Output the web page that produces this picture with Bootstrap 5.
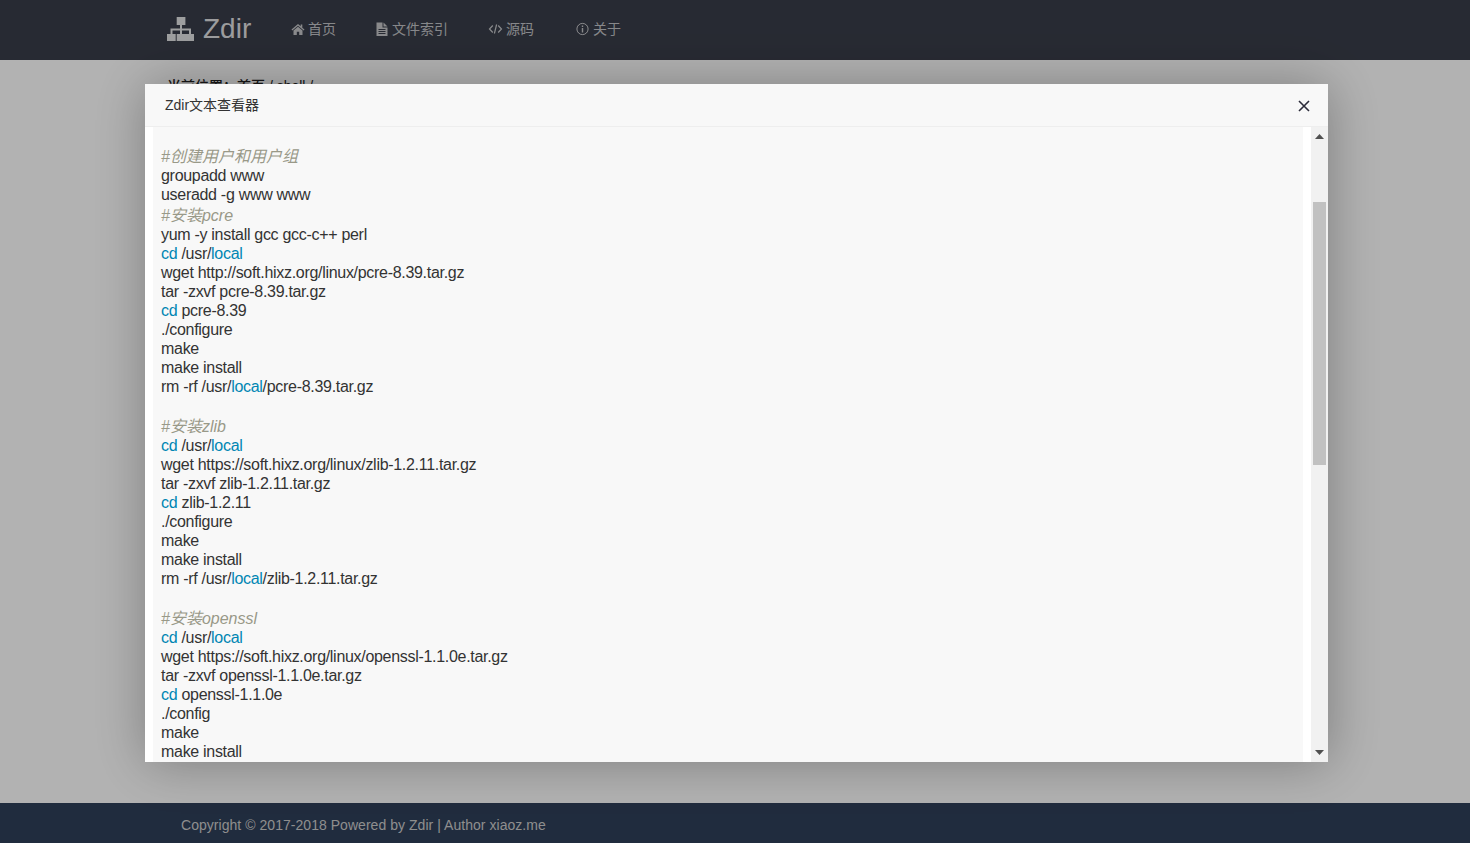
<!DOCTYPE html>
<html lang="zh-CN">
<head>
<meta charset="utf-8">
<title>Zdir</title>
<link href="https://cdn.jsdelivr.net/npm/bootstrap@5.3.0/dist/css/bootstrap.min.css" rel="stylesheet">
<style>
html,body{height:100%;}
body{font-family:"Liberation Sans","Noto Sans CJK SC",sans-serif;font-size:14px;background:#fff;overflow:hidden;}
.zd-page{height:100vh;}
.zd-nav{height:60px;background:#393d49;padding-left:167px;padding-bottom:2px;}
.zd-logo{color:rgba(255,255,255,.85);font-size:28px;line-height:58px;text-decoration:none;width:124px;}
.zd-logo svg{width:28px;height:24px;margin:0 8px 0 0;}
.zd-link{color:rgba(255,255,255,.7);text-decoration:none;font-size:14px;line-height:58px;margin-right:39px;}
.zd-link:nth-child(3){margin-right:40px;}
.zd-link:nth-child(4){margin-right:41px;}
.zd-link svg{width:14px;height:14px;margin-right:3px;fill:currentColor;}
.zd-link svg.zd-wide{width:15px;}
.zd-crumb{padding:16px 0 0 167px;font-size:14px;color:#222;line-height:21px;font-weight:500;}
.zd-foot{height:40px;background:#2f3f59;color:#ccc;padding-left:181px;line-height:44px;font-size:14px;letter-spacing:.04px;}
.zd-shade{position:fixed;inset:0;background:rgba(0,0,0,.3);}
.zd-layer{position:fixed;left:145px;top:84px;width:1183px;height:678px;background:#fff;box-shadow:1px 1px 50px rgba(0,0,0,.3);}
.zd-head{height:43px;background:#f8f8f8;border-bottom:1px solid #eee;padding:0 17px 0 20px;color:#333;font-size:14px;line-height:42px;}
.zd-x{width:14px;height:14px;stroke:#2c2c3a;stroke-width:1.6;margin-top:2px;}
.zd-body{min-height:0;}
.zd-white{padding:0 8px;min-width:0;}
.zd-code{height:100%;overflow:hidden;background:#f8f8f8;color:#333;font-size:16px;padding:18px 8px 0;white-space:nowrap;}
.zd-ln{height:19px;line-height:19px;letter-spacing:-.3px;}
.zd-gap{height:19px;}
.zd-cm{height:21px;line-height:19px;padding-top:2px;color:#999988;font-style:italic;}
.zd-bi{color:#0086b3;}
.zd-track{width:17px;background:#f1f1f1;}
.zd-tri{width:9px;height:5px;fill:#505050;margin:7px auto 0;display:block;}
.zd-tri-b{margin:0 auto 7px;}
.zd-thumb{width:13px;height:263px;background:#c1c1c1;margin:63px auto 0;}
</style>
</head>
<body>
<div class="zd-page d-flex flex-column">
  <nav class="zd-nav d-flex align-items-center">
    <a class="zd-logo d-flex align-items-center" href="#">
      <svg viewBox="0 0 28 24" fill="currentColor"><path d="M9.700 0h8.700v8h-3.400v3.500h9V17h3v7h-8.700v-7h3.700v-3.500H15V17h3.400v7H9.700v-7H13v-3.500H5.500V17h3.200v7H0v-7h3.500v-5.500H13V8H9.700z"/></svg>Zdir
    </a>
    <a class="zd-link d-flex align-items-center" href="#"><svg viewBox="0 0 14 14"><path d="M7 2 0.500 7.600l.8.9L7 3.700l5.700 4.800.8-.9L11.300 5.700V2.500H9.700v1.800zM2.500 8.500V13h3.300V9.800h2.400V13h3.300V8.500L7 4.700z"/></svg>首页</a>
    <a class="zd-link d-flex align-items-center" href="#"><svg viewBox="0 0 14 14"><path d="M1.500 0.500H7.500V5.500H12.500V14H1.500zM8.500 0.500 12.500 4.500H8.500zM3.500 7v1h7V7zM3.500 9v1h7V9zM3.500 11v1h7v-1z" fill-rule="evenodd"/></svg>文件索引</a>
    <a class="zd-link d-flex align-items-center" href="#"><svg class="zd-wide" viewBox="0 0 14 14"><path d="M4.300 3.500 1 7l3.300 3.500M9.700 3.500 13 7l-3.300 3.500M8.100 2.500 5.900 11.500" fill="none" stroke="currentColor" stroke-width="1.200"/></svg>源码</a>
    <a class="zd-link d-flex align-items-center" href="#"><svg class="zd-wide" viewBox="0 0 14 14"><circle cx="7" cy="7" r="5.600" fill="none" stroke="currentColor"/><path d="M6.300 3.600h1.400v1.400H6.300zM6.300 6h1.400v4.400H6.300z"/></svg>关于</a>
  </nav>
  <div class="zd-crumb flex-grow-1">当前位置：首页 / shell /</div>
  <footer class="zd-foot">Copyright © 2017-2018 Powered by Zdir | Author xiaoz.me</footer>
</div>
<div class="zd-shade"></div>
<div class="zd-layer d-flex flex-column">
  <div class="zd-head d-flex justify-content-between align-items-center flex-shrink-0">
    <span>Zdir文本查看器</span>
    <svg class="zd-x" viewBox="0 0 14 14"><path d="M2 2 12 12M12 2 2 12"/></svg>
  </div>
  <div class="zd-body d-flex flex-grow-1">
    <div class="zd-white flex-grow-1"><div class="zd-code">
<div class="zd-cm">#创建用户和用户组</div>
<div class="zd-ln">groupadd www</div>
<div class="zd-ln">useradd -g www www</div>
<div class="zd-cm">#安装pcre</div>
<div class="zd-ln">yum -y install gcc gcc-c++ perl</div>
<div class="zd-ln"><span class="zd-bi">cd</span> /usr/<span class="zd-bi">local</span></div>
<div class="zd-ln">wget http://soft.hixz.org/linux/pcre-8.39.tar.gz</div>
<div class="zd-ln">tar -zxvf pcre-8.39.tar.gz</div>
<div class="zd-ln"><span class="zd-bi">cd</span> pcre-8.39</div>
<div class="zd-ln">./configure</div>
<div class="zd-ln">make</div>
<div class="zd-ln">make install</div>
<div class="zd-ln">rm -rf /usr/<span class="zd-bi">local</span>/pcre-8.39.tar.gz</div>
<div class="zd-gap"></div>
<div class="zd-cm">#安装zlib</div>
<div class="zd-ln"><span class="zd-bi">cd</span> /usr/<span class="zd-bi">local</span></div>
<div class="zd-ln">wget https://soft.hixz.org/linux/zlib-1.2.11.tar.gz</div>
<div class="zd-ln">tar -zxvf zlib-1.2.11.tar.gz</div>
<div class="zd-ln"><span class="zd-bi">cd</span> zlib-1.2.11</div>
<div class="zd-ln">./configure</div>
<div class="zd-ln">make</div>
<div class="zd-ln">make install</div>
<div class="zd-ln">rm -rf /usr/<span class="zd-bi">local</span>/zlib-1.2.11.tar.gz</div>
<div class="zd-gap"></div>
<div class="zd-cm">#安装openssl</div>
<div class="zd-ln"><span class="zd-bi">cd</span> /usr/<span class="zd-bi">local</span></div>
<div class="zd-ln">wget https://soft.hixz.org/linux/openssl-1.1.0e.tar.gz</div>
<div class="zd-ln">tar -zxvf openssl-1.1.0e.tar.gz</div>
<div class="zd-ln"><span class="zd-bi">cd</span> openssl-1.1.0e</div>
<div class="zd-ln">./config</div>
<div class="zd-ln">make</div>
<div class="zd-ln">make install</div>
    </div></div>
    <div class="zd-track d-flex flex-column flex-shrink-0">
      <svg class="zd-tri" viewBox="0 0 9 5"><path d="M4.500 0 9 5H0z"/></svg>
      <div class="zd-thumb"></div>
      <div class="flex-grow-1"></div>
      <svg class="zd-tri zd-tri-b" viewBox="0 0 9 5"><path d="M0 0h9L4.500 5z"/></svg>
    </div>
  </div>
</div>
<script src="https://cdn.jsdelivr.net/npm/bootstrap@5.3.0/dist/js/bootstrap.bundle.min.js"></script>
</body>
</html>
